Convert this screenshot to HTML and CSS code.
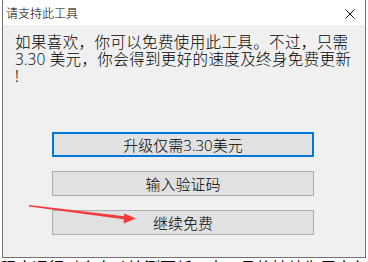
FILE: index.html
```html
<!DOCTYPE html>
<html lang="zh-CN">
<head>
<meta charset="utf-8">
<title>请支持此工具</title>
<link rel="stylesheet" href="styles.css">
</head>
<body>
<div class="window">
  <div class="titlebar">
    <span class="title">请支持此工具</span>
    <svg class="close" width="10" height="10" viewBox="0 0 10 10"><path d="M0.5 0.5 L9.5 9.5 M9.5 0.5 L0.5 9.5" stroke="#111" stroke-width="1" fill="none"/></svg>
  </div>
  <div class="content">
    <p class="message">如果喜欢，你可以免费使用此工具。不过，只需<br><span class="num">3.30</span> 美元，你会得到更好的速度及终身免费更新<br>!</p>
    <div class="buttons">
      <button class="btn btn-default">升级仅需<span class="num">3.30</span>美元</button>
      <button class="btn">输入验证码</button>
      <button class="btn">继续免费</button>
    </div>
  </div>
</div>
<div class="behind"><span>程序运行时会自动检测更新，本工具将持续为用户免费提供服务，感谢</span></div>
<svg class="arrow" width="368" height="262" viewBox="0 0 368 262">
  <polygon points="29,205.1 29,206.5 125.5,219.6 126.5,216.4" fill="#f43a3a"/>
  <polygon points="124.2,213.4 136,218.6 123.6,223.6" fill="#f43a3a"/>
</svg>
</body>
</html>
```
FILE: styles.css
```css
html, body {
  margin: 0;
  padding: 0;
}
body {
  width: 368px;
  height: 262px;
  overflow: hidden;
  background: #ffffff;
  position: relative;
  font-family: "Noto Sans", "Noto Sans CJK SC", sans-serif;
  color: #000;
}
.window {
  margin-left: 2px;
  width: 364px;
  height: 258px;
  box-sizing: border-box;
  border: 1px solid #707070;
  border-top: none;
  display: flex;
  flex-direction: column;
}
.titlebar {
  height: 25px;
  background: #ffffff;
  display: flex;
  align-items: center;
  justify-content: space-between;
  padding: 0 10px 0 3px;
  flex: none;
}
.title {
  font-size: 12px;
  line-height: 14px;
  font-family: "Noto Sans CJK SC", sans-serif;
  font-weight: 300;
}
.close {
  display: block;
  margin-top: 2px;
}
.content {
  flex: 1;
  background: #f0f0f0;
  padding: 9px 0 0 12px;
}
.message {
  margin: 0;
  font-size: 15.5px;
  letter-spacing: 0.38px;
  line-height: 17px;
  font-weight: 300;
}
.num {
  letter-spacing: 0;
  font-family: "Open Sans", "Noto Sans", sans-serif;
}
.buttons {
  display: flex;
  flex-direction: column;
  gap: 14px;
  margin-top: 47px;
  margin-left: 37px;
}
.btn {
  width: 262px;
  height: 25px;
  box-sizing: border-box;
  background: #e1e1e1;
  border: 1px solid #adadad;
  border-radius: 0;
  font-family: "Noto Sans", "Noto Sans CJK SC", sans-serif;
  font-size: 15px;
  font-weight: 300;
  line-height: 18px;
  color: #000;
  padding: 0;
  margin: 0;
}
.btn-default {
  border: 2px solid #0078d7;
}
.behind {
  height: 4px;
  overflow: hidden;
}
.behind span {
  display: block;
  font-family: "Noto Sans CJK SC", sans-serif;
  font-size: 16px;
  line-height: 18px;
  margin-top: 0;
  white-space: nowrap;
}
.arrow {
  position: absolute;
  left: 0;
  top: 0;
  pointer-events: none;
}
```
